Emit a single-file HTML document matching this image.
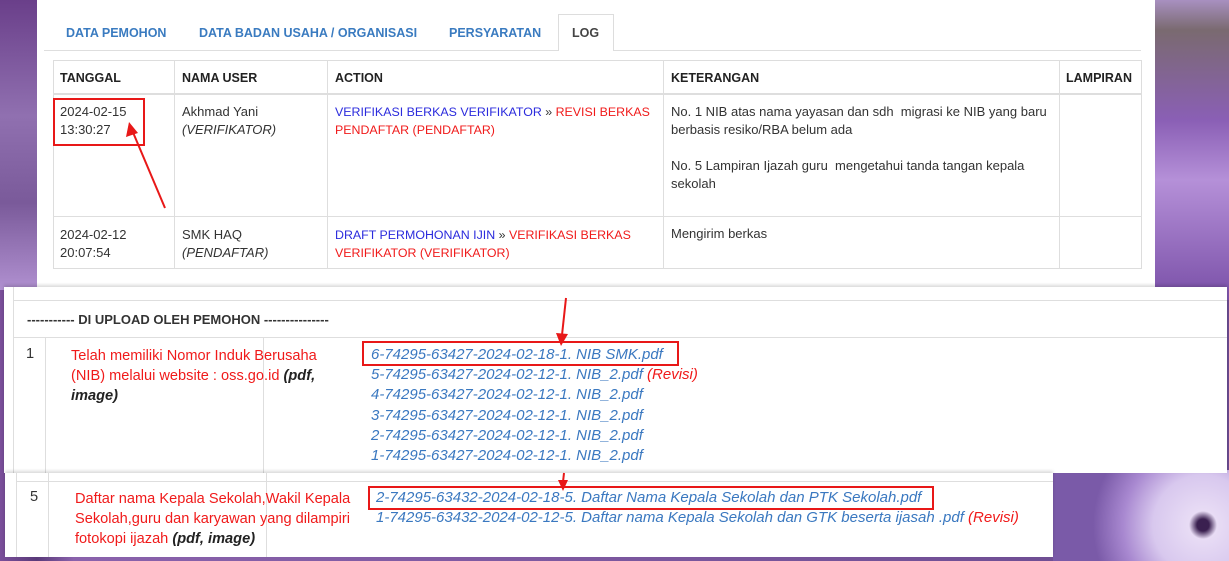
<!DOCTYPE html>
<html><head><meta charset="utf-8"><style>
*{margin:0;padding:0;box-sizing:border-box}
body{width:1229px;height:561px;overflow:hidden;position:relative;font-family:"Liberation Sans",sans-serif;
background:linear-gradient(90deg,#7a4f9a 0%,#5a3a7a 3%,#8a62ac 6%,#6b4b90 100%)}
.a{position:absolute;white-space:nowrap}
.p{position:absolute;background:#fff}
.l{position:absolute;background:#dedede}
.t{font-size:13px;color:#333}
.h{font-size:12.5px;font-weight:bold;color:#222}
.b{color:#2b2bdd}.r{color:#f01a1a}
.f{font-size:15px;font-style:italic;color:#3a78c0}
.q{font-size:14.6px;color:#f01a1a}
</style></head><body>
<div class="a" style="left:1155px;top:0;width:74px;height:300px;background:linear-gradient(180deg,#a890c0 0%,#7a6a70 10%,#8a5fb5 40%,#b590d8 60%,#7a50a8 100%)"></div>
<div class="a" style="left:1053px;top:470px;width:176px;height:91px;background:radial-gradient(circle at 150px 55px,#3a2050 6px,#e8dcf5 14px,#d8c8ee 50px,#a888d0 80px,#7a5aa8 110px)"></div>
<div class="a" style="left:0;top:0;width:37px;height:290px;background:linear-gradient(180deg,#6a3f8a,#9070b0 40%,#7a5a9a 70%,#b090d0)"></div>

<div class="p" style="left:37px;top:0;width:1118px;height:287px"></div>
<div class="l" style="left:44px;top:50px;width:1097px;height:1px"></div>
<div class="a" style="left:558px;top:14px;width:56px;height:37px;background:#fff;border:1px solid #ddd;border-bottom:none"></div>
<div class="a h" style="left:66px;top:26px;color:#3a7bc0">DATA PEMOHON</div>
<div class="a h" style="left:199px;top:26px;color:#3a7bc0">DATA BADAN USAHA / ORGANISASI</div>
<div class="a h" style="left:449px;top:26px;color:#3a7bc0">PERSYARATAN</div>
<div class="a h" style="left:572px;top:26px;color:#444">LOG</div>
<div class="a" style="left:53px;top:60px;width:1089px;height:209px;border:1px solid #ddd"></div>
<div class="l" style="left:53px;top:93px;width:1089px;height:2px"></div>
<div class="l" style="left:53px;top:216px;width:1089px;height:1px"></div>
<div class="l" style="left:174px;top:60px;width:1px;height:209px"></div>
<div class="l" style="left:327px;top:60px;width:1px;height:209px"></div>
<div class="l" style="left:663px;top:60px;width:1px;height:209px"></div>
<div class="l" style="left:1059px;top:60px;width:1px;height:209px"></div>
<div class="a h" style="left:60px;top:71px">TANGGAL</div>
<div class="a h" style="left:182px;top:71px">NAMA USER</div>
<div class="a h" style="left:335px;top:71px">ACTION</div>
<div class="a h" style="left:671px;top:71px">KETERANGAN</div>
<div class="a h" style="left:1066px;top:71px">LAMPIRAN</div>
<div class="a t" style="left:60px;top:103px;line-height:18px">2024-02-15<br>13:30:27</div>
<div class="a t" style="left:182px;top:103px;line-height:18px">Akhmad Yani<br><i>(VERIFIKATOR)</i></div>
<div class="a t" style="left:335px;top:103px;line-height:18px;font-size:12.4px"><span class="b">VERIFIKASI BERKAS VERIFIKATOR</span> » <span class="r">REVISI BERKAS<br>PENDAFTAR (PENDAFTAR)</span></div>
<div class="a t" style="left:671px;top:103px;line-height:18px">No. 1 NIB atas nama yayasan dan sdh&nbsp; migrasi ke NIB yang baru<br>berbasis resiko/RBA belum ada<br><br>No. 5 Lampiran Ijazah guru&nbsp; mengetahui tanda tangan kepala<br>sekolah</div>
<div class="a t" style="left:60px;top:226px;line-height:18px">2024-02-12<br>20:07:54</div>
<div class="a t" style="left:182px;top:226px;line-height:18px">SMK HAQ<br><i>(PENDAFTAR)</i></div>
<div class="a t" style="left:335px;top:226px;line-height:18px;font-size:12.4px"><span class="b">DRAFT PERMOHONAN IJIN</span> » <span class="r">VERIFIKASI BERKAS<br>VERIFIKATOR (VERIFIKATOR)</span></div>
<div class="a t" style="left:671px;top:226px">Mengirim berkas</div>
<div class="a" style="left:53px;top:98px;width:92px;height:48px;border:2px solid #e81818"></div>

<div class="p" style="left:4px;top:287px;width:1223px;height:186px;box-shadow:0 -2px 3px rgba(0,0,0,.15)"></div>
<div class="l" style="left:13px;top:287px;width:1px;height:186px"></div>
<div class="l" style="left:13px;top:300px;width:1214px;height:1px"></div>
<div class="l" style="left:13px;top:337px;width:1214px;height:1px"></div>
<div class="l" style="left:45px;top:337px;width:1px;height:136px"></div>
<div class="l" style="left:263px;top:337px;width:1px;height:136px"></div>
<div class="a" style="left:27px;top:312px;font-size:13px;font-weight:bold;color:#333">----------- DI UPLOAD OLEH PEMOHON ---------------</div>
<div class="a q" style="left:26px;top:346px;color:#333">1</div>
<div class="a q" style="left:71px;top:346px;line-height:20px">Telah memiliki Nomor Induk Berusaha<br>(NIB) melalui website : oss.go.id <b style="color:#222;font-style:italic">(pdf,</b><br><b style="color:#222;font-style:italic">image)</b></div>
<div class="a f" style="left:371px;top:345px;line-height:20.2px">6-74295-63427-2024-02-18-1. NIB SMK.pdf<br>5-74295-63427-2024-02-12-1. NIB_2.pdf <span style="color:#f01a1a">(Revisi)</span><br>4-74295-63427-2024-02-12-1. NIB_2.pdf<br>3-74295-63427-2024-02-12-1. NIB_2.pdf<br>2-74295-63427-2024-02-12-1. NIB_2.pdf<br>1-74295-63427-2024-02-12-1. NIB_2.pdf</div>
<div class="a" style="left:362px;top:341px;width:317px;height:25px;border:2px solid #e81818"></div>

<div class="p" style="left:5px;top:473px;width:1048px;height:84px;box-shadow:0 -2px 3px rgba(0,0,0,.15)"></div>
<div class="l" style="left:16px;top:473px;width:1px;height:84px"></div>
<div class="l" style="left:16px;top:481px;width:1037px;height:1px"></div>
<div class="l" style="left:48px;top:473px;width:1px;height:84px"></div>
<div class="l" style="left:266px;top:473px;width:1px;height:84px"></div>
<div class="a q" style="left:30px;top:489px;color:#333">5</div>
<div class="a q" style="left:75px;top:489px;line-height:20px">Daftar nama Kepala Sekolah,Wakil Kepala<br>Sekolah,guru dan karyawan yang dilampiri<br>fotokopi ijazah <b style="color:#222;font-style:italic">(pdf, image)</b></div>
<div class="a f" style="left:376px;top:488px;line-height:20px">2-74295-63432-2024-02-18-5. Daftar Nama Kepala Sekolah dan PTK Sekolah.pdf<br>1-74295-63432-2024-02-12-5. Daftar nama Kepala Sekolah dan GTK beserta ijasah .pdf <span style="color:#f01a1a">(Revisi)</span></div>
<div class="a" style="left:368px;top:486px;width:566px;height:24px;border:2px solid #e81818"></div>

<svg class="a" style="left:0;top:0" width="1229" height="561">
<g fill="#e81818" stroke="#e81818">
<line x1="165" y1="208" x2="132" y2="130" stroke-width="2"/>
<polygon points="129,122 126,137 138,133" stroke="none"/>
<line x1="566" y1="298" x2="562" y2="335" stroke-width="2"/>
<polygon points="561,346 556,333 568,334" stroke="none"/>
<line x1="564" y1="473" x2="563" y2="482" stroke-width="2"/>
<polygon points="563,491 558,480 568,480" stroke="none"/>
</g></svg>
</body></html>
